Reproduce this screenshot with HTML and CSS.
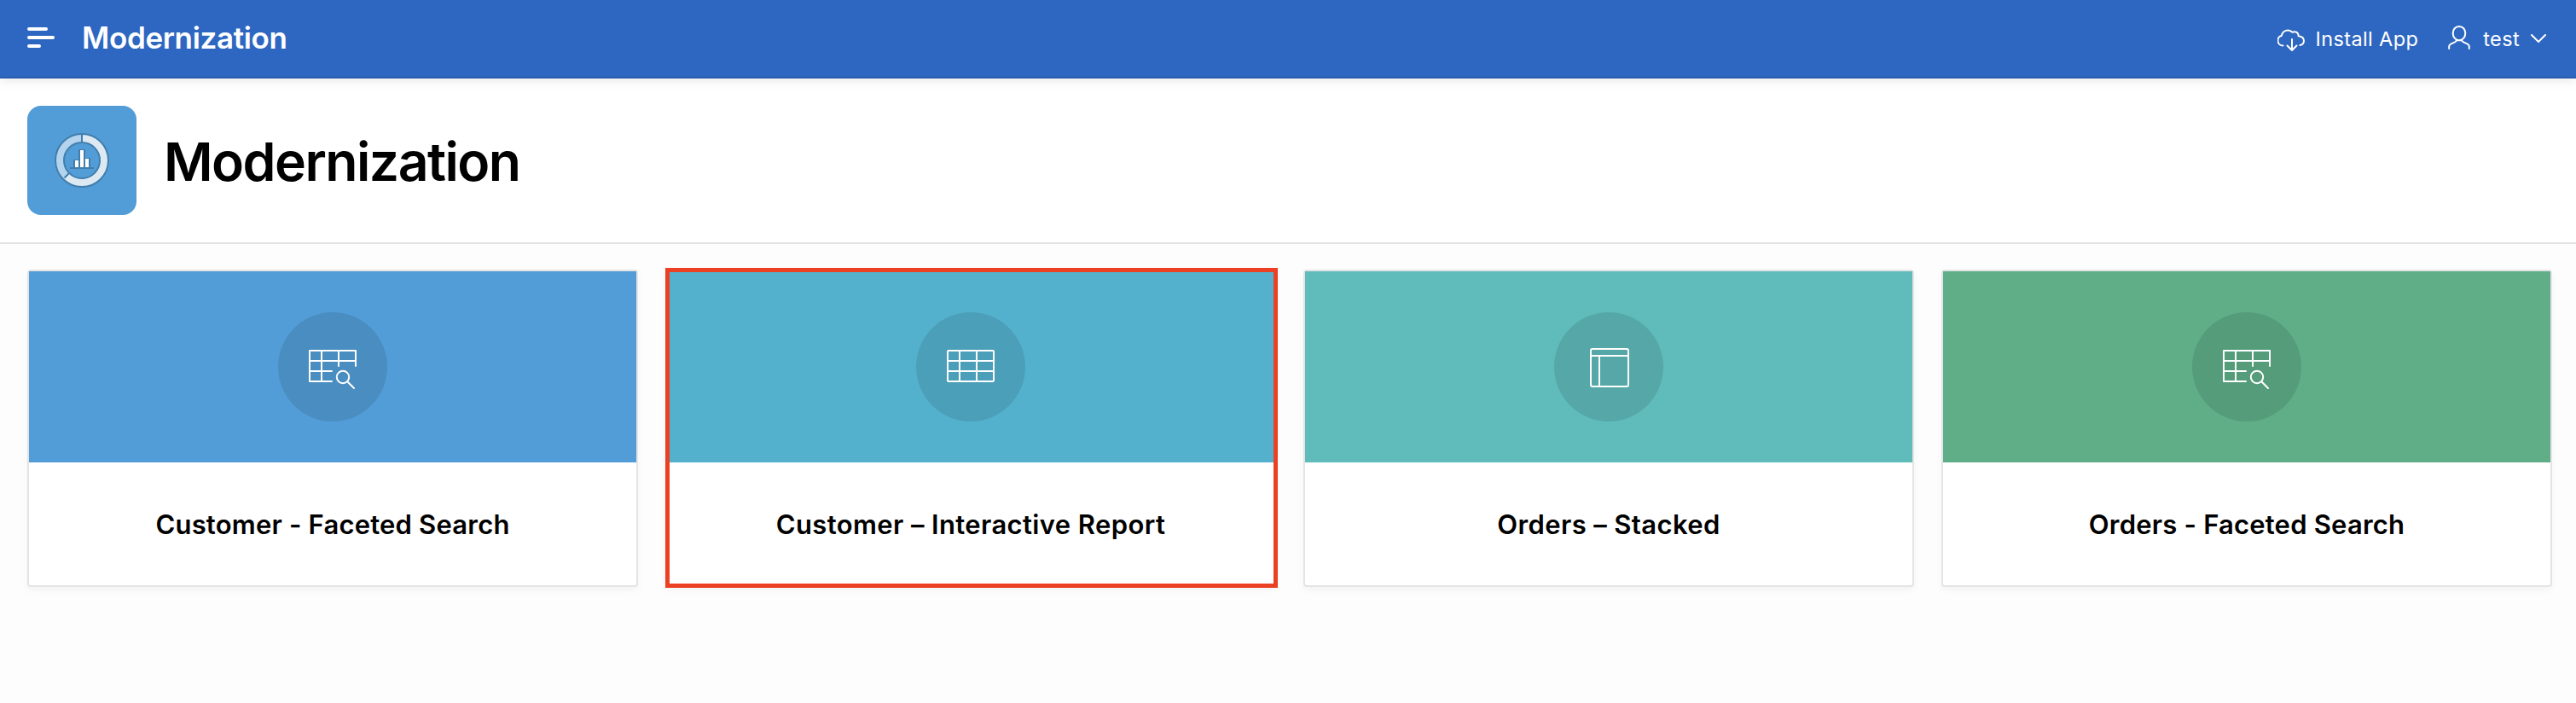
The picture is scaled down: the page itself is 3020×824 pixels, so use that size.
FILE: index.html
```
<!DOCTYPE html>
<html lang="en">
<head>
<meta charset="utf-8">
<title>Modernization</title>
<link rel="stylesheet" href="styles.css">
</head>
<body>
<header class="topbar">
  <svg class="menu-icon" viewBox="0 0 32 24"><path d="M2 2H22M2 12H30M2 22H14"/></svg>
  <span class="brand">Modernization</span>
  <nav class="nav">
    <a class="nav-item">
      <svg class="cloud" viewBox="0 0 32 28"><path d="M6.5 21.5A6 6 0 0 1 4.9 9.7A7.4 7.4 0 0 1 17.5 5.8Q19.6 4.6 22.3 5.6A5.2 5.2 0 0 1 24.6 10.3Q31 10.9 31 16A5.3 5.3 0 0 1 26.5 21M17 14V27M11.5 21.5L17 27L22.5 21.5"/></svg>
      <span class="nav-text">Install App</span>
    </a>
    <a class="nav-item">
      <svg class="user" viewBox="0 0 26 28"><path d="M13 1C17.4 1 20.3 4.4 20.3 9S17 17.3 13 17.3S5.7 13.6 5.7 9S8.6 1 13 1ZM1.2 27V24.5C1.2 20 9.9 20.8 9.9 17M24.8 27V24.5C24.8 20 16.1 20.8 16.1 17"/></svg>
      <span class="nav-text">test</span>
      <svg class="chevron" viewBox="0 0 18 11"><path d="M1 1L9 9L17 1"/></svg>
    </a>
  </nav>
</header>
<section class="hero">
  <div class="app-icon">
    <svg viewBox="0 0 64 64">
      <circle class="ring-light" cx="32" cy="32" r="26"/>
      <path class="ring-pale" d="M13.6 50.4A26 26 0 0 1 32 6"/>
      <circle class="outline" cx="32" cy="32" r="31"/>
      <circle class="outline" cx="32" cy="32" r="21"/>
      <path class="outline" d="M32 1V11M11.5 52.5L17.5 46.5"/>
      <path class="bars-edge" d="M22 40V31H28V19H36V29H42V40Z"/>
      <path class="outline" d="M18 41H46"/>
      <path class="bars" d="M24 32H28V40H24ZM30 20H34V40H30ZM36 30H40V40H36Z"/>
    </svg>
  </div>
  <h1 class="title">Modernization</h1>
</section>
<main class="cards">
  <article class="card">
    <div class="media blue"><div class="disc"><svg viewBox="0 0 128 128"><path d="M63 81H37V45H91V63M38 57H91M38 69H63M51 46V80M71 46V63"/><circle cx="76" cy="76" r="7.2"/><path d="M81.3 81.3L89 89"/></svg></div></div>
    <h2 class="label">Customer - Faceted Search</h2>
  </article>
  <article class="card selected">
    <div class="media cyan"><div class="disc"><svg viewBox="0 0 128 128"><rect x="37" y="45" width="54" height="36" rx="1"/><path d="M38 57H90M38 69H90M51 46V80M71 46V80"/></svg></div></div>
    <h2 class="label wide">Customer – Interactive Report</h2>
  </article>
  <article class="card">
    <div class="media teal"><div class="disc"><svg viewBox="0 0 128 128"><rect x="43" y="43" width="44" height="44" rx="2"/><path d="M44 51H86M53 52V86"/></svg></div></div>
    <h2 class="label wide">Orders – Stacked</h2>
  </article>
  <article class="card">
    <div class="media green"><div class="disc"><svg viewBox="0 0 128 128"><path d="M63 81H37V45H91V63M38 57H91M38 69H63M51 46V80M71 46V63"/><circle cx="76" cy="76" r="7.2"/><path d="M81.3 81.3L89 89"/></svg></div></div>
    <h2 class="label">Orders - Faceted Search</h2>
  </article>
</main>
</body>
</html>
```

FILE: styles.css
```
* { box-sizing: border-box; }
body { margin: 0; min-height: 824px; background: #fdfdfd; font-family: Inter, sans-serif; color: #000; overflow: hidden; }
svg { display: block; fill: none; stroke: #fff; stroke-width: 2; stroke-linecap: round; stroke-linejoin: round; }
.topbar { height: 92px; display: flex; align-items: center; padding: 0 35px 0 32px; background: #2e67c1; border-bottom: 2px solid #295bac; box-shadow: 0 2px 12px rgba(0,0,0,.1); position: relative; color: #fff; }
.menu-icon { width: 32px; height: 24px; stroke-width: 4; margin-top: -2px; }
.brand { margin: -2px 0 0 32px; font-size: 35px; font-weight: 600; letter-spacing: -.35px; }
.nav { margin-left: auto; display: flex; gap: 35px; }
.nav-item { display: flex; align-items: center; }
.nav-text { font-size: 23.5px; letter-spacing: .38px; }
.cloud { width: 32px; height: 28px; margin: 2px 12px 0 0; }
.user { width: 26px; height: 28px; margin: -2px 15px 0 0; }
.chevron { width: 18px; height: 11px; margin-left: 13px; }
.hero { height: 194px; display: flex; align-items: center; gap: 32px; padding: 0 32px; background: #fff; border-bottom: 2px solid #e2e2e2; }
.app-icon { width: 128px; height: 128px; border-radius: 16px; background: #529dd7; display: grid; place-items: center; }
.app-icon svg { width: 64px; height: 64px; stroke-linecap: butt; stroke-linejoin: miter; }
.app-icon .ring-light { stroke: #dce9f3; stroke-width: 9; }
.app-icon .ring-pale { stroke: #b3d4ec; stroke-width: 9; }
.outline { stroke: #427eac; }
.bars-edge { fill: #427eac; stroke: none; }
.bars { fill: #fff; stroke: none; }
.title { margin: 2px 0 0; font-size: 62.5px; font-weight: 600; letter-spacing: -1.55px; line-height: 80px; }
.cards { display: grid; grid-template-columns: repeat(4, 716px); gap: 32px; padding: 30px 28px 0 32px; }
.card { position: relative; height: 372px; background: #fff; border: 2px solid #e4e4e4; border-radius: 4px; box-shadow: 0 4px 8px rgba(0,0,0,.04); }
.selected::after { content: ""; position: absolute; inset: -4px -4px -3px -2px; border: 5px solid #ec4025; }
.media { height: 224px; display: grid; place-items: center; }
.blue { background: #529dd7; }
.cyan { background: #54b1cd; }
.teal { background: #60bbbb; }
.green { background: #5fae88; }
.disc { width: 128px; height: 128px; border-radius: 50%; background: rgba(0,0,0,.1); }
.label { margin: 0; height: 144px; display: grid; place-items: center; font-size: 31px; font-weight: 600; letter-spacing: .2px; }
.label.wide { letter-spacing: .38px; }
```
